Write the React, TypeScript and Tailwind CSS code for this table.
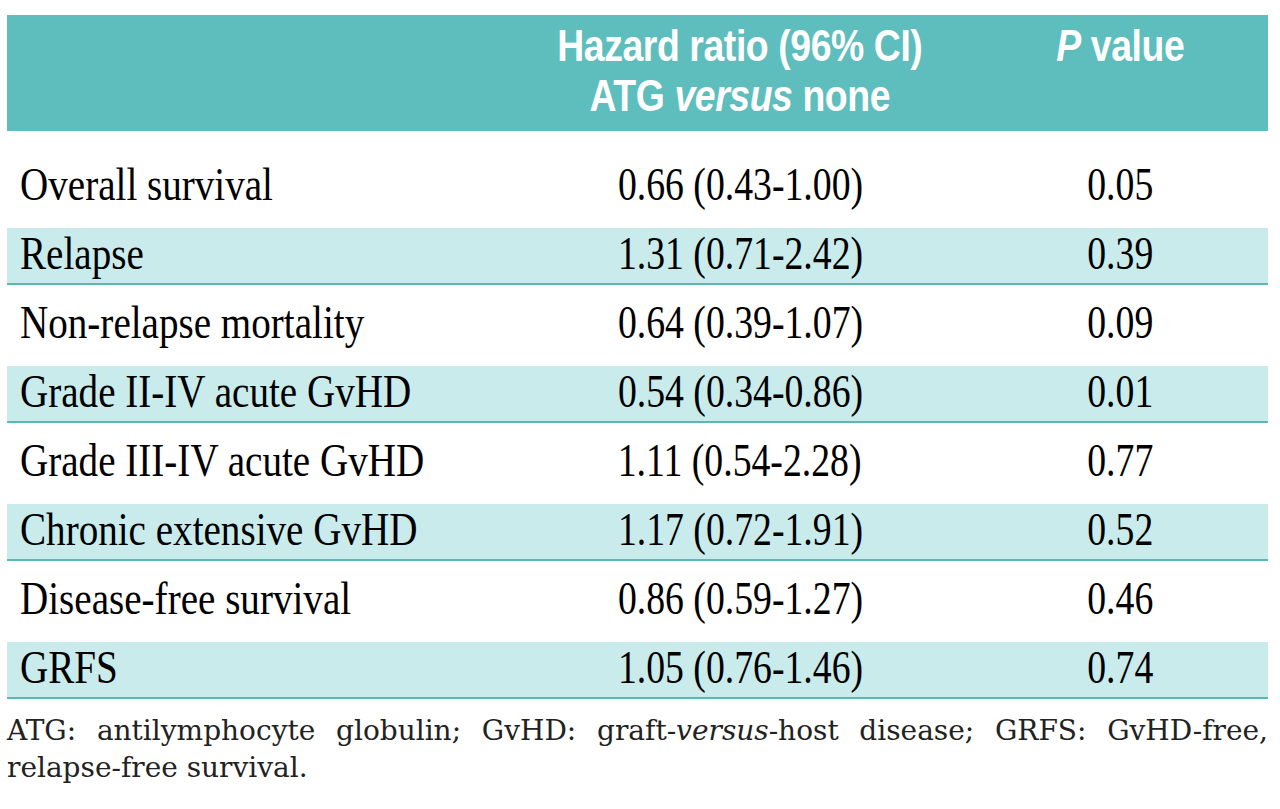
import React from 'react'

const rows = [
  { label: 'Overall survival', hr: '0.66 (0.43-1.00)', p: '0.05' },
  { label: 'Relapse', hr: '1.31 (0.71-2.42)', p: '0.39' },
  { label: 'Non-relapse mortality', hr: '0.64 (0.39-1.07)', p: '0.09' },
  { label: 'Grade II-IV acute GvHD', hr: '0.54 (0.34-0.86)', p: '0.01' },
  { label: 'Grade III-IV acute GvHD', hr: '1.11 (0.54-2.28)', p: '0.77' },
  { label: 'Chronic extensive GvHD', hr: '1.17 (0.72-1.91)', p: '0.52' },
  { label: 'Disease-free survival', hr: '0.86 (0.59-1.27)', p: '0.46' },
  { label: 'GRFS', hr: '1.05 (0.76-1.46)', p: '0.74' },
]

const headFont = "font-['Liberation_Sans',Arial,sans-serif]"
const bodyFont = "font-['Liberation_Serif',serif]"

export default function App() {
  return (
    <div className="min-h-[809px] w-[1280px] bg-white pt-[15px]">
      <div className="ml-[7px] w-[1261px]">
        {/* header */}
        <div className={`grid h-[116px] grid-cols-[501px_464px_296px] bg-[#5ebdbd] pt-[6px] text-[44px] font-bold leading-[50px] tracking-[-0.5px] text-white ${headFont}`}>
          <div />
          <div className="flex flex-col items-center">
            <span className="inline-block whitespace-nowrap [transform:scaleX(0.85)]">Hazard ratio (96% CI)</span>
            <span className="inline-block whitespace-nowrap [transform:scaleX(0.85)]">
              ATG <i>versus</i> none
            </span>
          </div>
          <div className="flex flex-col items-center">
            <span className="inline-block whitespace-nowrap [transform:scaleX(0.85)]">
              <i>P</i> value
            </span>
          </div>
        </div>

        {/* body */}
        <div className={`mt-[28px] flex flex-col gap-[12px] text-[46px] leading-none text-black ${bodyFont}`}>
          {rows.map((r, i) => {
            const shaded = i % 2 === 1
            return (
              <div
                key={r.label}
                className={
                  shaded
                    ? 'grid h-[57px] grid-cols-[501px_464px_296px] items-center border-b-2 border-[#5cb8b4] bg-[#c9ebeb] pb-[3px]'
                    : 'grid h-[57px] grid-cols-[501px_464px_296px] items-center border-b-2 border-transparent pb-[3px]'
                }
              >
                <div className="pl-[13px]">
                  <span className="inline-block origin-left whitespace-nowrap [transform:scaleX(0.85)]">{r.label}</span>
                </div>
                <div className="text-center">
                  <span className="inline-block whitespace-nowrap [transform:scaleX(0.82)]">{r.hr}</span>
                </div>
                <div className="text-center">
                  <span className="inline-block whitespace-nowrap [transform:scaleX(0.82)]">{r.p}</span>
                </div>
              </div>
            )
          })}
        </div>

        {/* footnote */}
        <div className="mt-[13px] font-['DejaVu_Serif',serif] text-[28px] leading-[37px] text-[#222]">
          <div className="text-justify [text-align-last:justify]">
            ATG: antilymphocyte globulin; GvHD: graft-<i>versus</i>-host disease; GRFS: GvHD-free,
          </div>
          <div>relapse-free survival.</div>
        </div>
      </div>
    </div>
  )
}
